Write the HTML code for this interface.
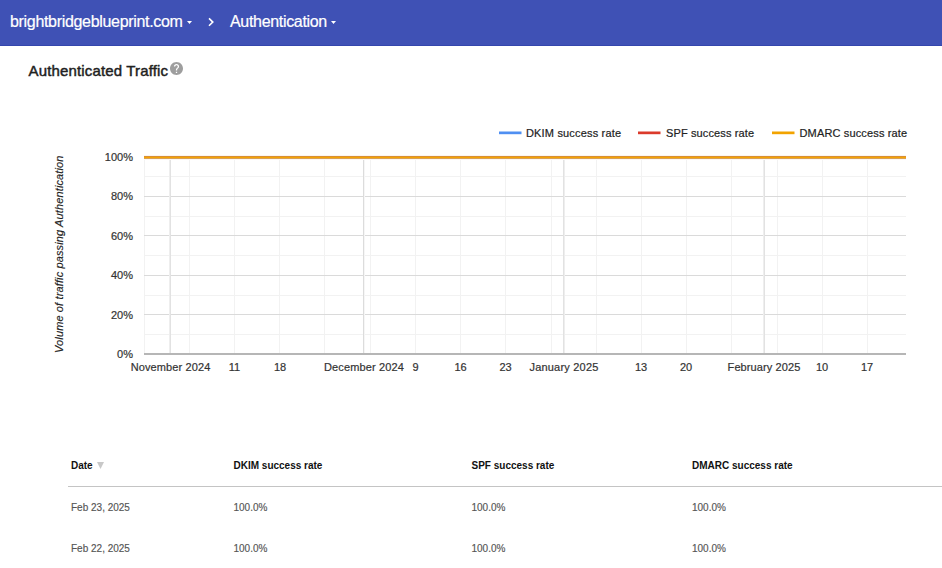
<!DOCTYPE html>
<html><head><meta charset="utf-8"><style>
html,body{margin:0;padding:0;background:#fff;width:942px;height:568px;overflow:hidden}
svg{display:block}
text{font-family:"Liberation Sans",sans-serif}
</style></head><body>
<svg width="942" height="568" viewBox="0 0 942 568">
<!-- header -->
<rect x="0" y="0" width="942" height="45" fill="#3f51b5"/>
<rect x="0" y="45" width="942" height="1" fill="#3446ad"/>
<text x="10" y="27" font-size="16" fill="#fff" stroke="#fff" stroke-width="0.2" letter-spacing="-0.32">brightbridgeblueprint.com</text>
<path d="M187 21h5l-2.5 3z" fill="#fff"/>
<path d="M209 18.4L212.8 22.1L209 25.8" fill="none" stroke="#fff" stroke-width="1.6"/>
<text x="230" y="27" font-size="16" fill="#fff" stroke="#fff" stroke-width="0.2" letter-spacing="-0.32">Authentication</text>
<path d="M331 21h5l-2.5 3z" fill="#fff"/>

<!-- title -->
<text x="28.5" y="76" font-size="15" fill="#212121" stroke="#212121" stroke-width="0.45" letter-spacing="0.15">Authenticated Traffic</text>
<path transform="translate(168.7 60.7) scale(0.65)" fill="#9e9e9e" d="M12 2C6.48 2 2 6.48 2 12s4.48 10 10 10 10-4.48 10-10S17.52 2 12 2zm1 17h-2v-2h2v2zm2.07-7.750l-.9.92C13.45 12.9 13 13.5 13 15h-2v-.5c0-1.1.45-2.1 1.17-2.83l1.24-1.26c.37-.36.59-.86.59-1.41 0-1.1-.9-2-2-2s-2 .9-2 2H8c0-2.21 1.79-4 4-4s4 1.79 4 4c0 .88-.36 1.68-.93 2.25z"/>

<!-- legend -->
<rect x="499" y="131.5" width="22.5" height="2.7" fill="#4f8ff2"/>
<text x="526" y="137" font-size="11" fill="#222" stroke="#222" stroke-width="0.2" letter-spacing="0.17">DKIM success rate</text>
<rect x="638" y="131.5" width="22.5" height="2.7" fill="#db3a2b"/>
<text x="666" y="137" font-size="11" fill="#222" stroke="#222" stroke-width="0.2" letter-spacing="0.13">SPF success rate</text>
<rect x="772" y="131.5" width="22.5" height="2.7" fill="#f2a300"/>
<text x="799.5" y="137" font-size="11" fill="#222" stroke="#222" stroke-width="0.2" letter-spacing="0.15">DMARC success rate</text>

<!-- minor gridlines horizontal -->
<g fill="#f2f2f2">
<rect x="144" y="176" width="762" height="1"/>
<rect x="144" y="216" width="762" height="1"/>
<rect x="144" y="255" width="762" height="1"/>
<rect x="144" y="295" width="762" height="1"/>
<rect x="144" y="334" width="762" height="1"/>
</g>
<!-- minor vertical -->
<g fill="#f2f2f2">
<rect x="144" y="157" width="1" height="197"/>
<rect x="189" y="157" width="1" height="197"/>
<rect x="234" y="157" width="1" height="197"/>
<rect x="279" y="157" width="1" height="197"/>
<rect x="324" y="157" width="1" height="197"/>
<rect x="370" y="157" width="1" height="197"/>
<rect x="415" y="157" width="1" height="197"/>
<rect x="460" y="157" width="1" height="197"/>
<rect x="505" y="157" width="1" height="197"/>
<rect x="551" y="157" width="1" height="197"/>
<rect x="596" y="157" width="1" height="197"/>
<rect x="641" y="157" width="1" height="197"/>
<rect x="686" y="157" width="1" height="197"/>
<rect x="731" y="157" width="1" height="197"/>
<rect x="777" y="157" width="1" height="197"/>
<rect x="822" y="157" width="1" height="197"/>
<rect x="867" y="157" width="1" height="197"/>
</g>
<!-- major horizontal -->
<g fill="#dadada">
<rect x="144" y="196" width="762" height="1"/>
<rect x="144" y="235" width="762" height="1"/>
<rect x="144" y="275" width="762" height="1"/>
<rect x="144" y="314" width="762" height="1"/>
</g>
<!-- month lines -->
<rect x="169" y="157" width="1" height="197" fill="#eeeeee"/>
<rect x="170" y="157" width="1" height="197" fill="#e2e2e2"/>
<rect x="363" y="157" width="1" height="197" fill="#dcdcdc"/>
<rect x="364" y="157" width="1" height="197" fill="#f6f6f6"/>
<rect x="563" y="157" width="1" height="197" fill="#e2e2e2"/>
<rect x="564" y="157" width="1" height="197" fill="#eeeeee"/>
<rect x="763" y="157" width="1" height="197" fill="#eeeeee"/>
<rect x="764" y="157" width="1" height="197" fill="#e2e2e2"/>
<!-- baseline -->
<rect x="144" y="353" width="762" height="2" fill="#b6b6b6"/>
<!-- series line -->
<rect x="144" y="155" width="762" height="1" fill="#fbf6f1"/>
<rect x="144" y="156" width="762" height="1" fill="#da8e34"/>
<rect x="144" y="157" width="762" height="1" fill="#f2a503"/>
<rect x="144" y="158" width="762" height="1" fill="#dc9f52"/>
<rect x="144" y="159" width="762" height="1" fill="#fbf7f3"/>

<!-- y labels -->
<g font-size="11" fill="#333" stroke="#333" stroke-width="0.2" text-anchor="end" transform="translate(1 0)">
<text x="132" y="161">100%</text>
<text x="132" y="200">80%</text>
<text x="132" y="240">60%</text>
<text x="132" y="279">40%</text>
<text x="132" y="319">20%</text>
<text x="132" y="358">0%</text>
</g>
<text transform="translate(63 254.2) rotate(-90)" font-size="11" font-style="italic" fill="#222" stroke="#222" stroke-width="0.15" text-anchor="middle" letter-spacing="0.13">Volume of traffic passing Authentication</text>

<!-- x labels -->
<g font-size="11" fill="#333" stroke="#333" stroke-width="0.2" text-anchor="middle">
<text x="170.6" y="371" letter-spacing="0.12">November 2024</text>
<text x="234.5" y="371">11</text>
<text x="280" y="371">18</text>
<text x="364" y="371" letter-spacing="0.15">December 2024</text>
<text x="415.5" y="371">9</text>
<text x="460.5" y="371">16</text>
<text x="505.5" y="371">23</text>
<text x="564" y="371" letter-spacing="0.2">January 2025</text>
<text x="641" y="371">13</text>
<text x="686" y="371">20</text>
<text x="764" y="371" letter-spacing="0.1">February 2025</text>
<text x="822" y="371">10</text>
<text x="867" y="371">17</text>
</g>

<!-- table -->
<g font-size="10" font-weight="bold" fill="#111">
<text x="71" y="469">Date</text>
<text x="233.5" y="469">DKIM success rate</text>
<text x="471.5" y="469">SPF success rate</text>
<text x="692" y="469">DMARC success rate</text>
</g>
<path d="M97 462h7l-3.5 7z" fill="#c8c8c8"/>
<rect x="68" y="486" width="874" height="1" fill="#c4c4c4"/>
<g font-size="10" fill="#555" stroke="#555" stroke-width="0.15">
<text x="71" y="511">Feb 23, 2025</text>
<text x="233.5" y="511">100.0%</text>
<text x="471.5" y="511">100.0%</text>
<text x="692" y="511">100.0%</text>
<text x="71" y="552">Feb 22, 2025</text>
<text x="233.5" y="552">100.0%</text>
<text x="471.5" y="552">100.0%</text>
<text x="692" y="552">100.0%</text>
</g>
</svg>
</body></html>
